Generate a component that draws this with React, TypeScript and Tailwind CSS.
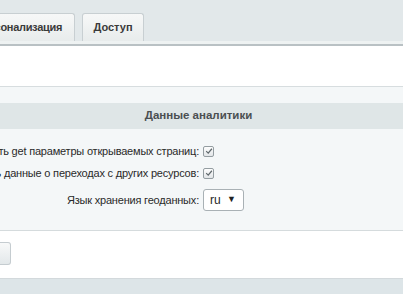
import React from "react";

function Check() {
  return (
    <span className="flex h-[11px] w-[11px] items-center justify-center rounded-[2px] border border-[#949da1] bg-gradient-to-b from-[#fdfdfd] to-[#e2e6e8]">
      <svg viewBox="0 0 10 10" className="h-[8px] w-[8px]">
        <path d="M1.5 5.2 L4 7.6 L8.6 2.2" fill="none" stroke="#5f686c" strokeWidth="1.5" />
      </svg>
    </span>
  );
}

function Row({ label, children }: { label: string; children: React.ReactNode }) {
  return (
    <div className="flex h-[22px] items-center">
      <div className="flex w-[199px] shrink-0 justify-end overflow-hidden whitespace-nowrap text-[11px] tracking-[-0.2px] text-[#2a2a2a]">
        {label}
      </div>
      <div className="ml-[4px] flex items-center">{children}</div>
    </div>
  );
}

export default function App() {
  return (
    <div className="flex h-[294px] w-[403px] flex-col overflow-hidden bg-[#e2e8ea] font-['Liberation_Sans',Arial,sans-serif]">
      {/* tabs */}
      <div className="flex h-[41px] shrink-0 items-end gap-[7px] pt-[13px]">
        <div className="flex h-[28px] w-[75px] shrink-0 items-center justify-end overflow-hidden whitespace-nowrap rounded-tr-[3px] border border-b-0 border-l-0 border-[#c8cfd2] bg-gradient-to-b from-[#f7f8f8] to-[#e8ecec] pr-[12px] text-[11px] font-bold tracking-[-0.3px] text-[#3a3a3a]">
          Персонализация
        </div>
        <div className="flex h-[28px] w-[62px] shrink-0 items-center justify-center rounded-t-[3px] border border-b-0 border-[#c8cfd2] bg-gradient-to-b from-[#f7f8f8] to-[#e8ecec] text-[11px] font-bold text-[#3a3a3a]">
          Доступ
        </div>
      </div>
      <div className="h-[3px] shrink-0 bg-[#eef2f2]" />
      <div className="h-[2px] shrink-0 bg-[#b9c1c4]" />

      {/* white area */}
      <div className="h-[41px] shrink-0 border-b border-[#d7dddf] bg-white" />

      {/* settings table */}
      <div className="flex h-[143px] shrink-0 flex-col bg-[#f4f7f8] pt-[16px]">
        <div className="flex h-[26px] items-center justify-center bg-[#dfe6e7] pr-[6px] text-[11.5px] font-bold text-[#4b4f51]">
          Данные аналитики
        </div>
        <div className="mt-[11px] flex flex-col">
          <Row label="Учитывать get параметры открываемых страниц:">
            <Check />
          </Row>
          <Row label="Сохранять данные о переходах с других ресурсов:">
            <Check />
          </Row>
          <div className="mt-[5px]">
            <Row label="Язык хранения геоданных:">
              <div className="flex h-[22px] w-[41px] items-center justify-between rounded-[3px] border border-[#a9b1b5] bg-white pl-[6px] pr-[7px] text-[12px] text-[#1f1f1f]">
                <span>ru</span>
                <span className="text-[9px] text-[#222]">▼</span>
              </div>
            </Row>
          </div>
        </div>
      </div>

      {/* buttons area */}
      <div className="flex h-[48px] shrink-0 items-start border-t border-[#d5dbdd] bg-white pt-[11px]">
        <div className="h-[23px] w-[11px] rounded-r-[3px] border border-l-0 border-[#c5ccd0] bg-gradient-to-b from-[#f8f9f9] to-[#e3e8ea]" />
      </div>
      <div className="flex-1 border-t border-[#d3d9dc] bg-[#dde5e8]" />
    </div>
  );
}
